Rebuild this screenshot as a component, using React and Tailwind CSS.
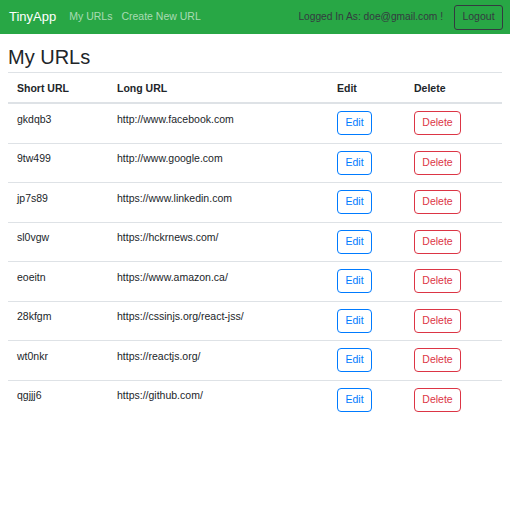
import React from "react";

const urls = [
  { id: "gkdqb3", long: "http://www.facebook.com" },
  { id: "9tw499", long: "http://www.google.com" },
  { id: "jp7s89", long: "https://www.linkedin.com" },
  { id: "sl0vgw", long: "https://hckrnews.com/" },
  { id: "eoeitn", long: "https://www.amazon.ca/" },
  { id: "28kfgm", long: "https://cssinjs.org/react-jss/" },
  { id: "wt0nkr", long: "https://reactjs.org/" },
  { id: "qgjjj6", long: "https://github.com/" },
];

function App() {
  return (
    <div className="min-h-screen bg-white text-[#212529] font-['Liberation_Sans',Arial,sans-serif] text-[10.5px]">
      {/* navbar */}
      <nav className="h-[34px] bg-[#28a745] flex items-center pl-[9px] pr-[7px]">
        <span className="text-[13px] text-white mr-[13px]">TinyApp</span>
        <a className="text-[10.5px] text-white/60 mr-[9px]">My URLs</a>
        <a className="text-[10.5px] text-white/60">Create New URL</a>
        <div className="ml-auto flex items-center">
          <span className="text-[10.2px] text-[#343a40] mr-[11px]">Logged In As: doe@gmail.com !</span>
          <button className="h-[25px] w-[49px] border border-[#343a40] rounded-[3px] text-[10.5px] text-[#343a40]">
            Logout
          </button>
        </div>
      </nav>

      <div className="px-[8px]">
        <h1 className="text-[20px] leading-[24px] mt-[11px] mb-[3px] font-normal">My URLs</h1>

        <table className="w-full border-collapse">
          <thead>
            <tr className="border-t border-[#dee2e6] border-b-2">
              <th className="w-[100px] text-left font-bold px-[9px] py-[6.5px] leading-[16px]">Short URL</th>
              <th className="w-[220px] text-left font-bold px-[9px] py-[6.5px] leading-[16px]">Long URL</th>
              <th className="w-[77px] text-left font-bold px-[9px] py-[6.5px] leading-[16px]">Edit</th>
              <th className="text-left font-bold px-[9px] py-[6.5px] leading-[16px]">Delete</th>
            </tr>
          </thead>
          <tbody>
            {urls.map((u, i) => (
              <tr key={u.id} className={i > 0 ? "border-t border-[#dee2e6]" : ""}>
                <td className="px-[9px] pt-[6.5px] align-top leading-[16px]">{u.id}</td>
                <td className="px-[9px] pt-[6.5px] align-top leading-[16px]">{u.long}</td>
                <td className="px-[9px] pt-[7px] pb-[7.5px] align-top">
                  <button className="h-[24px] w-[35px] border border-[#007bff] rounded-[4px] text-[#007bff] text-[10.5px]">
                    Edit
                  </button>
                </td>
                <td className="px-[9px] pt-[7px] pb-[7.5px] align-top">
                  <button className="h-[24px] w-[47px] border border-[#dc3545] rounded-[4px] text-[#dc3545] text-[10.5px]">
                    Delete
                  </button>
                </td>
              </tr>
            ))}
          </tbody>
        </table>
      </div>
    </div>
  );
}

export default App;
